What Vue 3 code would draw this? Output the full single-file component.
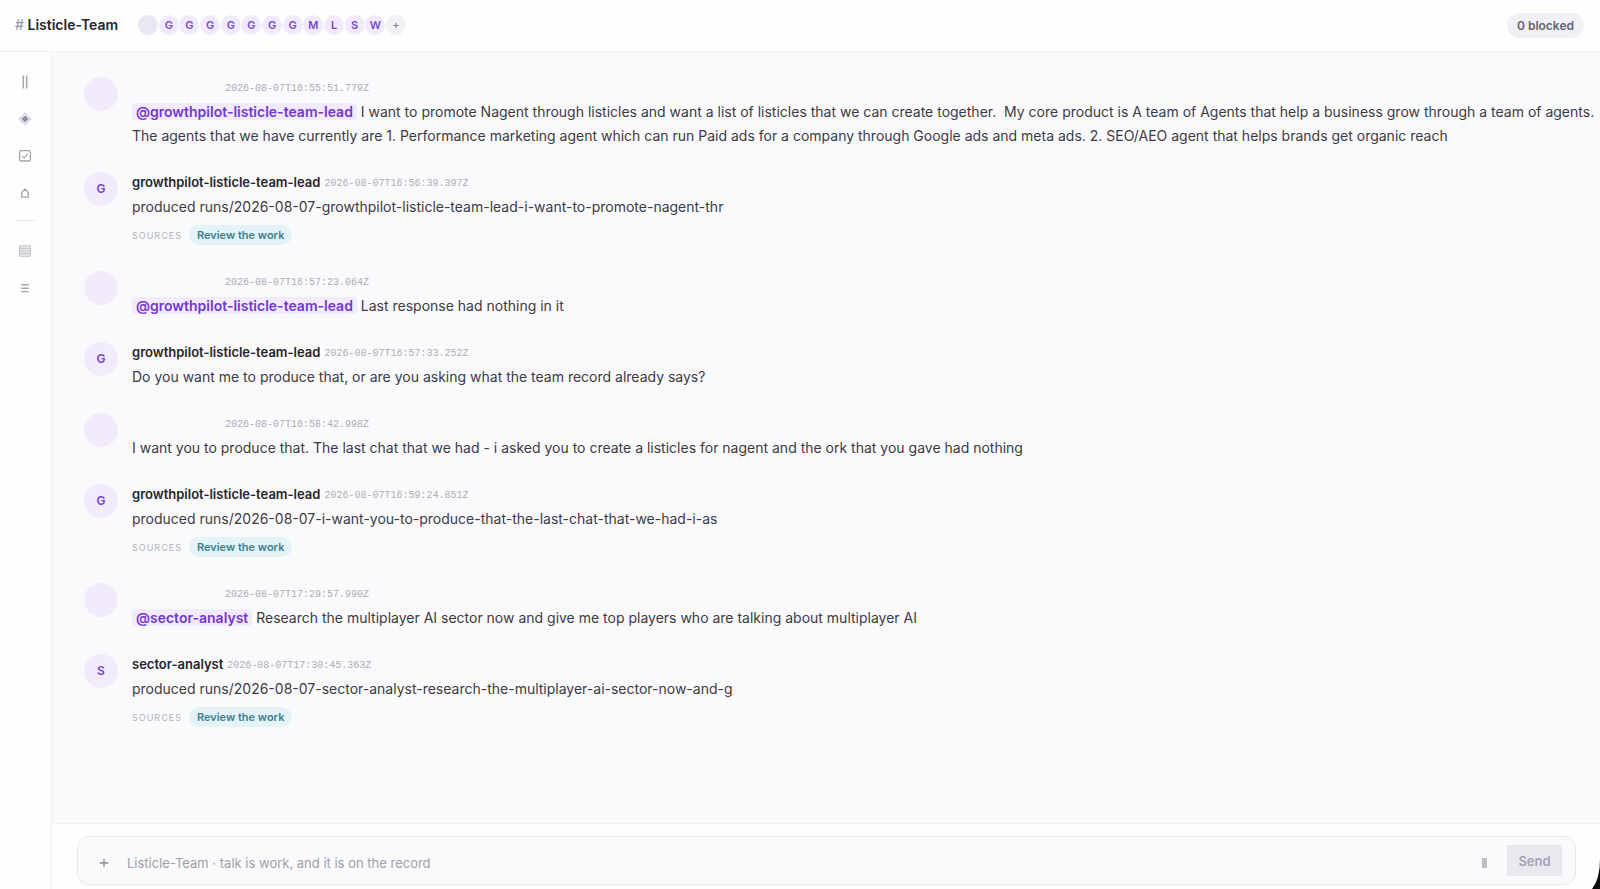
<script setup>
import { ref } from 'vue'

const members = ['', 'G', 'G', 'G', 'G', 'G', 'G', 'G', 'M', 'L', 'S', 'W']
const draft = ref('')

const messages = [
  {
    time: '2026-08-07T16:55:51.779Z',
    mention: '@growthpilot-listicle-team-lead',
    text: ' I want to promote Nagent through listicles and want a list of listicles that we can create together.\u00a0 My core product is A team of Agents that help a business grow through a team of agents. The agents that we have currently are 1. Performance marketing agent which can run Paid ads for a company through Google ads and meta ads. 2. SEO/AEO agent that helps brands get organic reach',
  },
  {
    initial: 'G',
    name: 'growthpilot-listicle-team-lead',
    time: '2026-08-07T16:56:39.397Z',
    text: 'produced runs/2026-08-07-growthpilot-listicle-team-lead-i-want-to-promote-nagent-thr',
    source: 'Review the work',
  },
  {
    time: '2026-08-07T16:57:23.064Z',
    mention: '@growthpilot-listicle-team-lead',
    text: ' Last response had nothing in it',
  },
  {
    initial: 'G',
    name: 'growthpilot-listicle-team-lead',
    time: '2026-08-07T16:57:33.252Z',
    text: 'Do you want me to produce that, or are you asking what the team record already says?',
  },
  {
    time: '2026-08-07T16:58:42.998Z',
    text: 'I want you to produce that. The last chat that we had - i asked you to create a listicles for nagent and the ork that you gave had nothing',
  },
  {
    initial: 'G',
    name: 'growthpilot-listicle-team-lead',
    time: '2026-08-07T16:59:24.851Z',
    text: 'produced runs/2026-08-07-i-want-you-to-produce-that-the-last-chat-that-we-had-i-as',
    source: 'Review the work',
  },
  {
    time: '2026-08-07T17:29:57.990Z',
    mention: '@sector-analyst',
    text: ' Research the multiplayer AI sector now and give me top players who are talking about multiplayer AI',
  },
  {
    initial: 'S',
    name: 'sector-analyst',
    time: '2026-08-07T17:30:45.363Z',
    text: 'produced runs/2026-08-07-sector-analyst-research-the-multiplayer-ai-sector-now-and-g',
    source: 'Review the work',
  },
]
</script>

<template>
  <div class="app">
    <header class="topbar">
      <h1 class="title"><span class="hash">#</span> Listicle-Team</h1>
      <div class="members">
        <span v-for="(m, i) in members" :key="i" class="member" :class="{ blank: !m }">{{ m }}</span>
        <button class="member add" type="button" aria-label="Add member">+</button>
      </div>
      <span class="blocked">0 blocked</span>
    </header>

    <div class="body">
      <nav class="rail" aria-label="Sections">
        <button type="button" aria-label="Channels">
          <svg width="16" height="16" viewBox="0 0 16 16"><path d="M6.3 1.5v13M9.7 1.5v13" stroke="#a9a8b3" stroke-width="1.6" /></svg>
        </button>
        <button type="button" aria-label="Agents">
          <svg width="16" height="16" viewBox="0 0 16 16"><path d="M8 2.2 13.8 8 8 13.8 2.2 8Z" fill="#f1f0f6" stroke="#b9b8c6" stroke-width="1" /><path d="M8 4.4 11.6 8 8 11.6 4.4 8Z" fill="#8f8da3" /></svg>
        </button>
        <button type="button" aria-label="Tasks">
          <svg width="16" height="16" viewBox="0 0 16 16" fill="none" stroke="#a5a4b0"><rect x="2.6" y="2.6" width="10.8" height="10.4" rx="1.6" stroke-width="1.3" /><path d="m5.4 8.2 1.8 1.9 3.4-4.3" stroke-width="1.2" /></svg>
        </button>
        <button type="button" aria-label="Home">
          <svg width="16" height="16" viewBox="0 0 16 16" fill="none" stroke="#a5a4b0" stroke-width="1.3"><path d="M4.8 12.2V7.6L8 4l3.2 3.6v4.6M4 12.2h8" /></svg>
        </button>
        <hr />
        <button type="button" aria-label="Records">
          <svg width="16" height="16" viewBox="0 0 16 16"><path d="M2.5 2.7h11v10.6h-11z" fill="#e6e5eb" stroke="#c6c5ce" /><path d="M3 5.4h10M3 8h10M3 10.6h10" stroke="#c6c5ce" /></svg>
        </button>
        <button type="button" aria-label="Menu">
          <svg width="16" height="16" viewBox="0 0 16 16"><path d="M4.2 4.8h7.6M4.2 8.2h7.6M4.2 11.6h7.6" stroke="#a5a4b0" stroke-width="1.4" /></svg>
        </button>
      </nav>

      <main class="main">
        <section class="feed" aria-label="Messages">
          <article v-for="(m, i) in messages" :key="i" class="message">
            <span class="avatar">{{ m.initial }}</span>
            <div class="content">
              <div class="meta">
                <strong class="name">{{ m.name }}</strong>
                <time>{{ m.time }}</time>
              </div>
              <p class="text"><span v-if="m.mention" class="mention">{{ m.mention }}</span>{{ m.text }}</p>
              <div v-if="m.source" class="sources">
                <span class="label">SOURCES</span>
                <a href="#" class="source">{{ m.source }}</a>
              </div>
            </div>
          </article>
        </section>

        <footer class="dock">
          <form class="composer" @submit.prevent>
            <button class="attach" type="button" aria-label="Attach">
              <svg width="10" height="10" viewBox="0 0 10 10"><path d="M5 .8v8.4M.8 5h8.4" stroke="#8c8b97" stroke-width="1.3" /></svg>
            </button>
            <input v-model="draft" type="text" aria-label="Message" placeholder="Listicle-Team · talk is work, and it is on the record" />
            <button class="mic" type="button" aria-label="Dictate"><span></span></button>
            <button class="send" type="submit">Send</button>
          </form>
        </footer>
      </main>
    </div>
    <svg class="corner" width="8" height="30" viewBox="0 0 8 30"><path d="M8 0Q8 20 0 30H8Z" fill="#0b0b0c" /></svg>
  </div>
</template>

<style>
body {
  margin: 0;
  background: #fff;
}
</style>

<style scoped>
.app {
  position: relative;
  box-sizing: border-box;
  display: flex;
  flex-direction: column;
  min-height: 100vh;
  overflow: hidden;
  background: #fefefe;
  color: #3b3a44;
  font-family: Inter, "Liberation Sans", sans-serif;
  font-size: 14px;
}
button,
input {
  font: inherit;
  border: 0;
  padding: 0;
  background: none;
}
button {
  cursor: pointer;
}
.topbar {
  display: flex;
  align-items: center;
  box-sizing: border-box;
  height: 52px;
  padding: 0 16px 1px 15px;
  border-bottom: 1px solid #f1f0f4;
}
.title {
  margin: 0;
  font-size: 14px;
  line-height: 20px;
  font-weight: 600;
  color: #25242d;
}
.hash {
  font-weight: 500;
  color: #9a99a8;
}
.members {
  display: flex;
  justify-content: space-between;
  width: 268px;
  margin-left: 20px;
}
.member {
  width: 20px;
  height: 20px;
  border-radius: 50%;
  background: #f1eafc;
  box-shadow: 0 0 0 1px #fefefe;
  color: #7448cb;
  font-size: 11px;
  line-height: 20px;
  font-weight: 600;
  text-align: center;
}
.blank {
  background: #e9e8f2;
}
.add {
  background: #f2f1f6;
  color: #7f7e8a;
  font-weight: 500;
}
.blocked {
  margin-left: auto;
  padding: 0 10px;
  border-radius: 13px;
  background: #f1f0f6;
  color: #666475;
  font-size: 12px;
  line-height: 25px;
  font-weight: 600;
}
.body {
  display: flex;
  flex: 1;
}
.rail {
  display: flex;
  flex-direction: column;
  align-items: center;
  gap: 5px;
  box-sizing: border-box;
  width: 52px;
  padding: 14px 1px 0 0;
  border-right: 1px solid #f1f0f4;
}
.rail button {
  display: grid;
  place-items: center;
  width: 32px;
  height: 32px;
}
.rail hr {
  width: 20px;
  height: 1px;
  margin: 6px 0 9px;
  border: 0;
  background: #e3e2e8;
}
.main {
  display: flex;
  flex-direction: column;
  flex: 1;
  min-width: 0;
}
.feed {
  display: flex;
  flex-direction: column;
  flex: 1;
  gap: 24px;
  padding: 25px 4px 25px 32px;
  background: #fafafd;
}
.message {
  display: flex;
  gap: 14px;
}
.avatar {
  flex: none;
  width: 34px;
  height: 34px;
  border-radius: 50%;
  background: #f1ebfc;
  color: #7444d0;
  font-size: 12px;
  line-height: 34px;
  font-weight: 600;
  text-align: center;
}
.content {
  flex: 1;
  min-width: 0;
}
.meta {
  display: flex;
  align-items: center;
  gap: 4px;
  height: 20px;
  margin-bottom: 3px;
  line-height: 20px;
}
.name {
  font-size: 13px;
  font-weight: 600;
  color: #25242d;
}
.name:empty {
  width: 89px;
}
time {
  padding-top: 4px;
  line-height: 16px;
  color: #adacb6;
  font-family: "Liberation Mono", monospace;
  font-size: 10px;
}
.text {
  margin: 0;
  line-height: 24px;
}
.mention {
  padding: 0 4px;
  border-radius: 4px;
  background: #f2eafd;
  color: #7437d3;
  font-weight: 600;
}
.sources {
  display: flex;
  align-items: center;
  gap: 7px;
  height: 20px;
  margin: 6px 0 2px;
}
.label {
  color: #b3b2bb;
  font-size: 9px;
  letter-spacing: 1px;
}
.source {
  padding: 0 8px;
  border-radius: 10px;
  background: #e3f3f7;
  color: #3c7f92;
  font-size: 11px;
  line-height: 20px;
  font-weight: 600;
  text-decoration: none;
}
.dock {
  padding: 12px 24px 4px 25px;
  border-top: 1px solid #f1f0f4;
}
.composer {
  display: flex;
  align-items: center;
  box-sizing: border-box;
  height: 49px;
  padding: 0 13px;
  border: 1px solid #e8e7ec;
  border-radius: 12px;
  background: #fafafc;
}
.attach {
  display: grid;
  place-items: center;
  width: 26px;
  height: 26px;
  margin-top: 4px;
}
.composer input {
  flex: 1;
  min-width: 0;
  height: 24px;
  margin: 4px 10px 0;
  color: #3b3a44;
  font-size: 13px;
  outline: 0;
}
.composer input::placeholder {
  color: #a09fac;
  opacity: 1;
}
.mic {
  display: grid;
  place-items: center;
  width: 24px;
  height: 24px;
  margin: 4px 11px 0 0;
}
.mic span {
  width: 5px;
  height: 10px;
  background: #bdbcc6;
}
.send {
  width: 55px;
  height: 31px;
  background: #e9e8ef;
  color: #a3a1b0;
  font-size: 13px;
  font-weight: 600;
}
.corner {
  position: absolute;
  right: 0;
  bottom: 0;
}
</style>
